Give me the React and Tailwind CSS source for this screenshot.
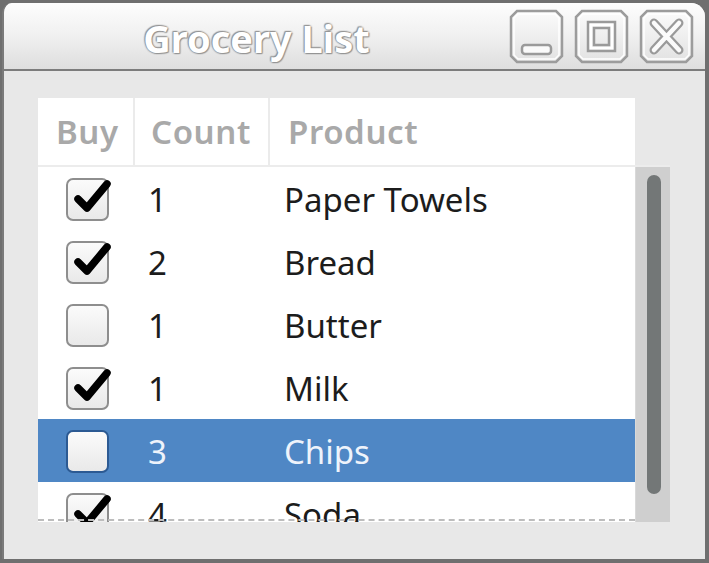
import React from "react";

const rows = [
  { checked: true, count: "1", name: "Paper Towels" },
  { checked: true, count: "2", name: "Bread" },
  { checked: false, count: "1", name: "Butter" },
  { checked: true, count: "1", name: "Milk" },
  { checked: false, count: "3", name: "Chips", selected: true },
  { checked: true, count: "4", name: "Soda" },
];

function Check({ checked, selected }) {
  return (
    <div
      className={`relative w-[43px] h-[43px] rounded-[7px] border-2 ${
        selected ? "border-[#2c5a93]" : "border-[#8e8e8e]"
      } bg-gradient-to-b from-[#fbfbfb] to-[#e9e9e9]`}
    >
      {checked && (
        <svg className="absolute left-[3px] top-[-4px]" width="42" height="40" viewBox="0 0 42 40">
          <path d="M7 23 L16 32 L36 8" fill="none" stroke="#000" strokeWidth="7.5" strokeLinecap="round" strokeLinejoin="round" />
        </svg>
      )}
    </div>
  );
}

function WinButton({ kind }) {
  return (
    <svg width="55" height="55" viewBox="0 0 55 55">
      <defs>
        <linearGradient id={`g-${kind}`} x1="0" y1="0" x2="0" y2="1">
          <stop offset="0" stopColor="#fbfbfb" />
          <stop offset="1" stopColor="#e2e2e2" />
        </linearGradient>
      </defs>
      <path d="M8 2 H47 L53 8 V47 L47 53 H8 L2 47 V8 Z" fill={`url(#g-${kind})`} stroke="#9c9c9c" strokeWidth="2.5" />
      <path d="M9 5 H46 L50 9 V46 L46 50 H9 L5 46 V9 Z" fill="none" stroke="#ffffff" strokeWidth="1.5" />
      {kind === "min" && (
        <rect x="13" y="36" width="29" height="9" rx="3" fill="#fafafa" stroke="#9a9a9a" strokeWidth="2.5" />
      )}
      {kind === "max" && (
        <g fill="none">
          <rect x="14" y="13" width="27" height="29" stroke="#9a9a9a" strokeWidth="2.5" />
          <rect x="17" y="16" width="21" height="23" stroke="#ffffff" strokeWidth="2.5" />
          <rect x="20" y="19" width="15" height="17" stroke="#9a9a9a" strokeWidth="2.5" />
        </g>
      )}
      {kind === "close" && (
        <g strokeLinecap="round">
          <path d="M15 14 L40 41 M40 14 L15 41" stroke="#9a9a9a" strokeWidth="9" />
          <path d="M15 14 L40 41 M40 14 L15 41" stroke="#fbfbfb" strokeWidth="4.5" />
        </g>
      )}
    </svg>
  );
}

export default function App() {
  return (
    <div className="w-[709px] h-[563px] bg-[#6f6f6f] pt-[3px] pl-[2px] font-['Noto_Sans',sans-serif] overflow-hidden">
      <div className="w-[703px] h-[556px] border-l-2 border-[#7a7a7a] rounded-tl-[10px] rounded-tr-[14px] bg-[#e8e8e8] flex flex-col overflow-hidden">
        {/* Title bar */}
        <div className="h-[68px] shrink-0 flex items-center bg-gradient-to-b from-[#fdfdfd] via-[#f0f0f0] to-[#dedede] border-b-2 border-[#7c7c7c]">
          <div className="flex-1 flex justify-center pt-[3px]">
            <span className="text-[38px] font-bold text-white leading-none [text-shadow:0_0_2px_#8a8a8a,0_0_2px_#8a8a8a,1px_1px_1px_#9a9a9a,-1px_-1px_1px_#9a9a9a]">
              Grocery List
            </span>
          </div>
          <div className="flex items-center gap-[10px] pr-[11px]">
            <WinButton kind="min" />
            <WinButton kind="max" />
            <WinButton kind="close" />
          </div>
        </div>

        {/* Body */}
        <div className="flex-1 pl-[34px] pt-[27px] flex">
          <div className="w-[597px] flex flex-col">
            <div className="h-[67px] bg-white flex text-[33px] font-semibold text-[#a9a9a9] tracking-[0.6px]">
              <div className="w-[97px] border-r-2 border-[#ebebeb] pl-[18px] flex items-center">Buy</div>
              <div className="w-[135px] border-r-2 border-[#ebebeb] pl-[16px] flex items-center">Count</div>
              <div className="flex-1 pl-[18px] flex items-center">Product</div>
            </div>
            <div className="h-[2px] bg-[#ececec]" />
            <div className="relative h-[355px] bg-white overflow-hidden">
              {rows.map((r, i) => (
                <div
                  key={i}
                  className={`h-[63px] flex items-center text-[33px] ${
                    r.selected ? "bg-[#4f87c5] text-[#eef3fb]" : "text-[#1c1c1c]"
                  }`}
                >
                  <div className="w-[97px] pl-[28px] pt-[1px]">
                    <Check checked={r.checked} selected={r.selected} />
                  </div>
                  <div className="w-[137px] pl-[13px] pt-[3px]">{r.count}</div>
                  <div className="flex-1 pl-[12px] pt-[3px]">{r.name}</div>
                </div>
              ))}
              <div className="absolute left-0 right-0 top-[352px] border-t-2 border-dashed border-[#bdbdbd]" />
            </div>
          </div>
          <div className="w-[35px] flex flex-col">
            <div className="h-[67px]" />
            <div className="h-[2px] bg-[#ececec]" />
            <div className="h-[355px] bg-[#cfcfcf] border-l border-[#d9d9d9] px-[11px] pt-[8px]">
              <div className="w-[14px] h-[319px] rounded-full bg-[#737777]" />
            </div>
          </div>
        </div>
      </div>
    </div>
  );
}
